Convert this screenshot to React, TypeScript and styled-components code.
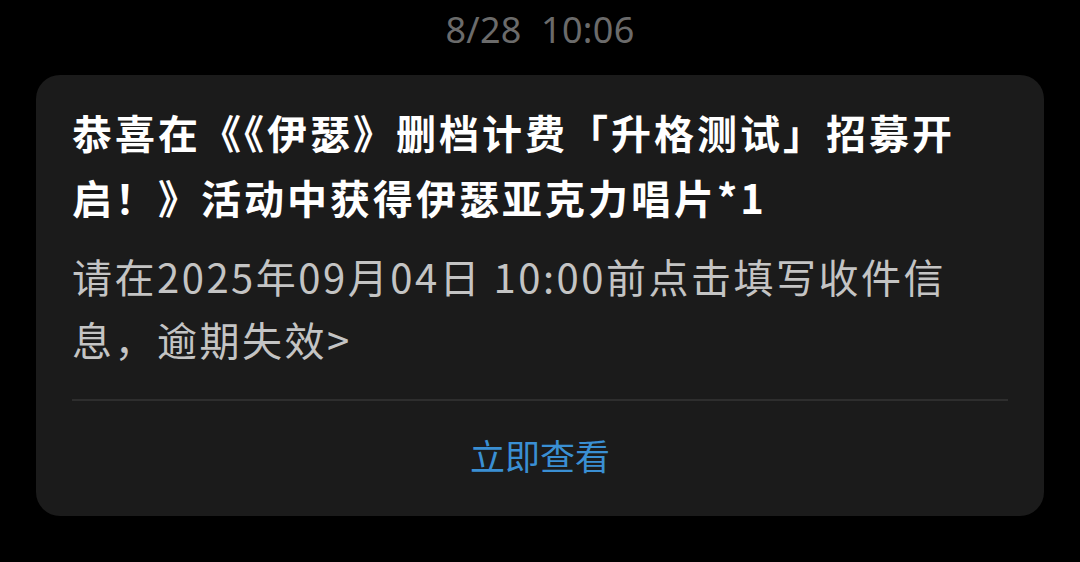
import styled, { createGlobalStyle } from "styled-components";

const GlobalStyle = createGlobalStyle`
  html, body {
    margin: 0;
    padding: 0;
    background: #000;
  }
  body {
    font-family: "Noto Sans CJK SC", "Noto Sans", sans-serif;
  }
`;

const Page = styled.div`
  width: 1080px;
  height: 562px;
  background: #000;
  display: flex;
  flex-direction: column;
  align-items: center;
`;

const Time = styled.div`
  height: 60px;
  line-height: 60px;
  font-size: 36px;
  letter-spacing: 0.3px;
  color: #6b6b6b;
  white-space: pre;
  font-family: "Noto Sans", "Noto Sans CJK SC", sans-serif;
`;

const Card = styled.div`
  margin-top: 15px;
  width: 1008px;
  box-sizing: border-box;
  background: #1b1b1b;
  border-radius: 24px;
  padding: 25px 36px 0;
`;

const Title = styled.div`
  font-size: 40px;
  line-height: 65px;
  font-weight: 700;
  letter-spacing: 3px;
  color: #fff;
`;

const Body = styled.div`
  margin-top: 15px;
  font-size: 40px;
  line-height: 63px;
  letter-spacing: 2.5px;
  color: #c4c4c4;
`;

const Divider = styled.div`
  margin-top: 28px;
  height: 2px;
  background: #2e2e2e;
`;

const Action = styled.div`
  height: 115px;
  box-sizing: border-box;
  padding-bottom: 8px;
  display: flex;
  align-items: center;
  justify-content: center;
  font-size: 35px;
  color: #3a8fd3;
`;

export default function App() {
  return (
    <Page>
      <GlobalStyle />
      <Time>{"8/28  10:06"}</Time>
      <Card>
        <Title>
          恭喜在《《伊瑟》删档计费「升格测试」招募开
          <br />
          启！》活动中获得伊瑟亚克力唱片*1
        </Title>
        <Body>
          请在2025年09月04日 10:00前点击填写收件信
          <br />
          息，逾期失效&gt;
        </Body>
        <Divider />
        <Action>立即查看</Action>
      </Card>
    </Page>
  );
}
